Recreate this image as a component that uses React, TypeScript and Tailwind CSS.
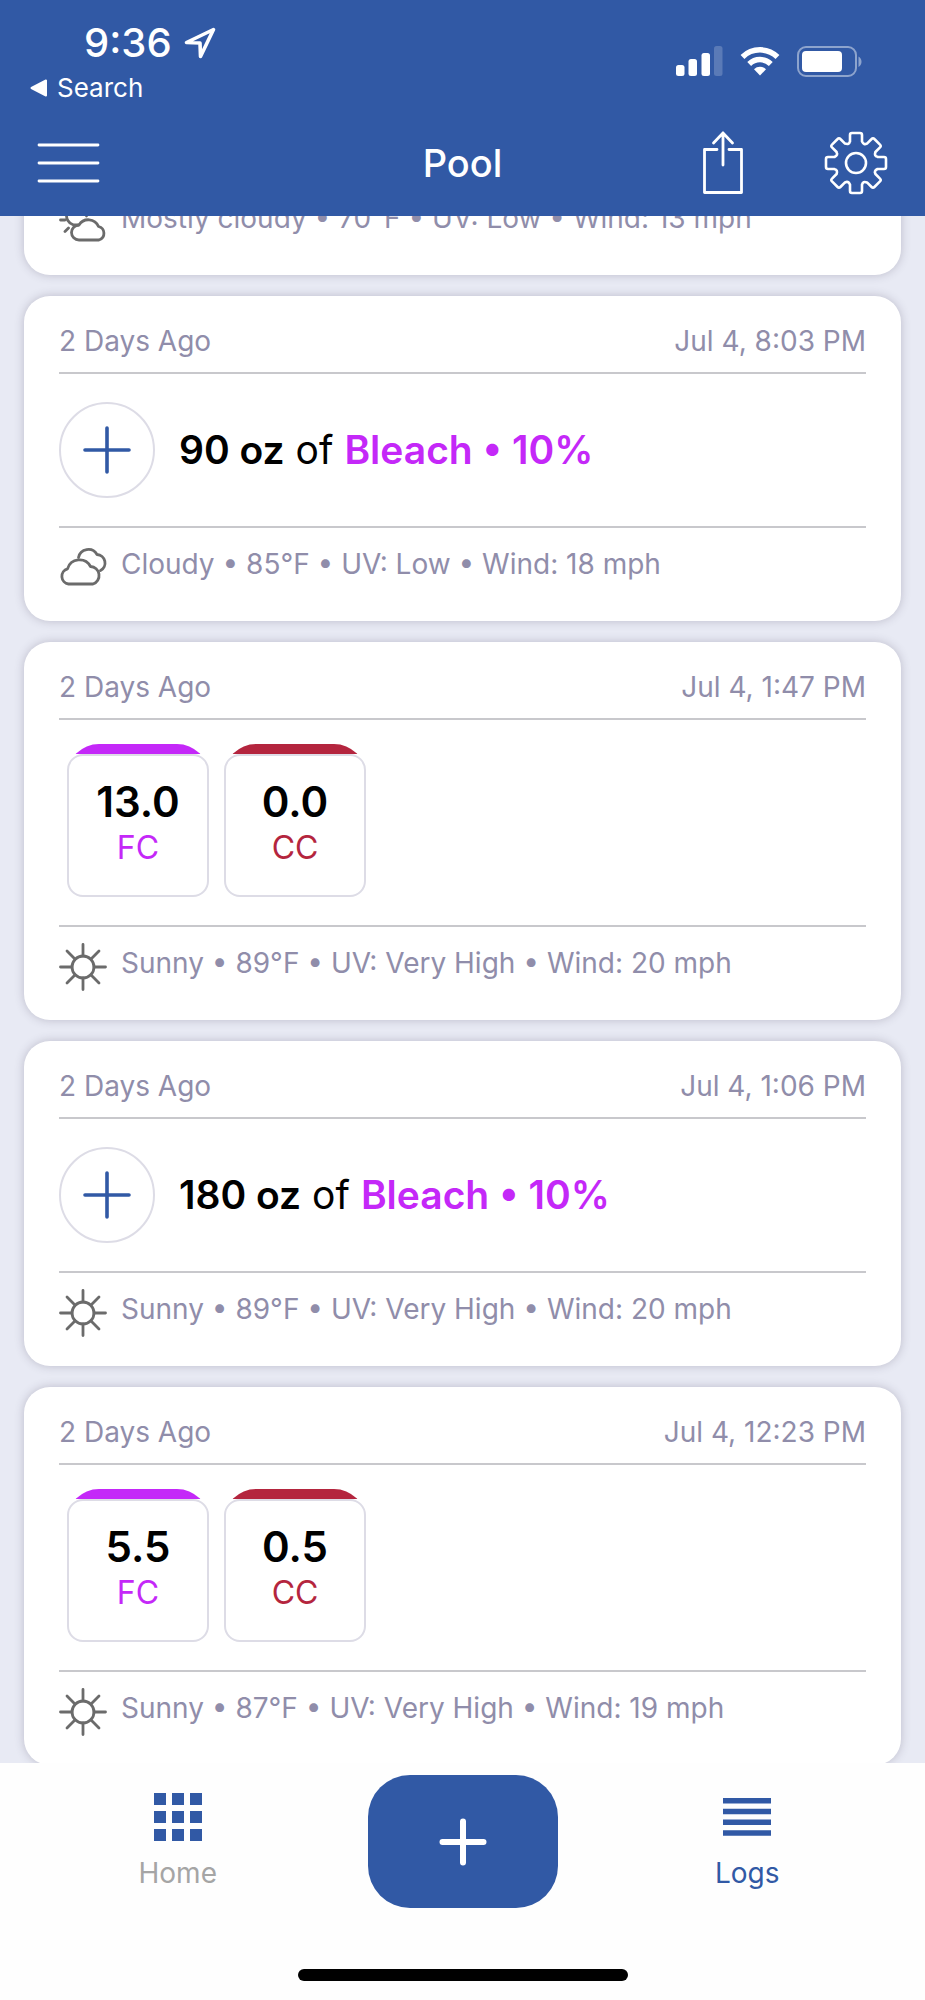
import { useState } from 'react';
import type { ReactNode } from 'react';

type Weather = 'sunny' | 'cloudy' | 'mostly-cloudy';

interface Reading {
  label: 'FC' | 'CC';
  value: string;
}

interface LogEntry {
  id: number;
  age: string;
  date: string;
  addition?: { amount: string; chemical: string };
  readings?: Reading[];
  weather: Weather;
  summary: string;
}

const logs: LogEntry[] = [
  {
    id: 1,
    age: '2 Days Ago',
    date: 'Jul 4, 8:03 PM',
    addition: { amount: '90 oz', chemical: 'Bleach • 10%' },
    weather: 'cloudy',
    summary: 'Cloudy • 85°F • UV: Low • Wind: 18 mph',
  },
  {
    id: 2,
    age: '2 Days Ago',
    date: 'Jul 4, 1:47 PM',
    readings: [
      { label: 'FC', value: '13.0' },
      { label: 'CC', value: '0.0' },
    ],
    weather: 'sunny',
    summary: 'Sunny • 89°F • UV: Very High • Wind: 20 mph',
  },
  {
    id: 3,
    age: '2 Days Ago',
    date: 'Jul 4, 1:06 PM',
    addition: { amount: '180 oz', chemical: 'Bleach • 10%' },
    weather: 'sunny',
    summary: 'Sunny • 89°F • UV: Very High • Wind: 20 mph',
  },
  {
    id: 4,
    age: '2 Days Ago',
    date: 'Jul 4, 12:23 PM',
    readings: [
      { label: 'FC', value: '5.5' },
      { label: 'CC', value: '0.5' },
    ],
    weather: 'sunny',
    summary: 'Sunny • 87°F • UV: Very High • Wind: 19 mph',
  },
];

const readingColors = {
  FC: { bar: 'bg-[#c428f8]', text: 'text-[#c428f8]' },
  CC: { bar: 'bg-[#b4253e]', text: 'text-[#b4253e]' },
};

const WeatherIcon = ({ type }: { type: Weather }) => (
  <svg
    viewBox="0 0 48 48"
    className="size-12 shrink-0"
    fill="none"
    stroke="#6b6b6b"
    strokeWidth="2.8"
    strokeLinecap="round"
    strokeLinejoin="round"
    aria-hidden="true"
  >
    {type === 'sunny' && (
      <>
        <circle cx="24" cy="24" r="11" />
        <path d="M24 13V1.5M24 35v11.5M13 24H1.5M35 24h11.5M16.2 16.2 8 8M31.8 16.2 40 8M16.2 31.8 8 40M31.8 31.8 40 40" />
      </>
    )}
    {type === 'cloudy' && (
      <>
        <path d="M9.5 40A7.800 7.800 0 0 1 8.500 24.800 12.500 12.500 0 0 1 31.500 22.500 9 9 0 0 1 34 40z" />
        <path d="M19.500 13.500A10 10 0 0 1 38 10.500a8.500 8.500 0 0 1 3.500 16" />
      </>
    )}
    {type === 'mostly-cloudy' && (
      <>
        <path d="M20 42a7.500 7.500 0 0 1 0-15 11 11 0 0 1 19.500 1.500A7 7 0 0 1 40 42z" />
        <path d="M19.500 27h-5a10 10 0 1 1 13-9M1.500 22H6M9.500 30 6 33.500M9 12 6 9M20 7V3" />
      </>
    )}
  </svg>
);

const WeatherRow = ({ type, summary }: { type: Weather; summary: string }) => (
  <div className="flex items-start gap-3.5 pt-4 pb-[29px]">
    <WeatherIcon type={type} />
    <p className="text-[28px] leading-10 text-[#908daa]">{summary}</p>
  </div>
);

const Card = ({ children }: { children: ReactNode }) => (
  <li className="rounded-[26px] bg-white px-[35px] shadow-[0_0_10px_rgba(60,50,80,0.25)]">{children}</li>
);

const LogCard = ({ log }: { log: LogEntry }) => (
  <Card>
    <div className="flex h-[78px] items-center justify-between border-b-2 border-[#c8c8cc] pt-3.5 text-[28px] leading-10 text-[#908daa]">
      <span>{log.age}</span>
      <time>{log.date}</time>
    </div>
    {log.addition && (
      <div className="flex items-center gap-6 border-b-2 border-[#c8c8cc] py-7">
        <span className="flex size-[96px] shrink-0 items-center justify-center rounded-full border-2 border-[#dddce6]">
          <svg viewBox="0 0 48 48" className="size-12" stroke="#3159a5" strokeWidth="3.6" strokeLinecap="round" aria-hidden="true">
            <path d="M24 2v44M2 24h44" />
          </svg>
        </span>
        <p className="text-[39px] leading-12 text-black">
          <span className="font-semibold">{log.addition.amount}</span> of{' '}
          <span className="font-semibold text-[#c428f8]">{log.addition.chemical}</span>
        </p>
      </div>
    )}
    {log.readings && (
      <ul className="flex gap-[15px] border-b-2 border-[#c8c8cc] px-2 pt-6 pb-7">
        {log.readings.map((reading) => (
          <li key={reading.label} className="w-[142px]">
            {/* coloured tab on top of the tile */}
            <div className="h-[10px] overflow-hidden">
              <div className={`h-14 rounded-t-[32px] ${readingColors[reading.label].bar}`} />
            </div>
            <div className="flex h-[143px] flex-col items-center rounded-2xl border-2 border-[#dddce6] bg-white pt-5">
              <span className="text-[42px] leading-[52px] font-semibold text-black">{reading.value}</span>
              <span className={`text-[32px] leading-10 ${readingColors[reading.label].text}`}>{reading.label}</span>
            </div>
          </li>
        ))}
      </ul>
    )}
    <WeatherRow type={log.weather} summary={log.summary} />
  </Card>
);

const StatusBar = () => (
  <div className="flex justify-between pt-[18px] pr-[62px] pl-[30px]">
    <div>
      <div className="flex items-center gap-3 pl-[54px]">
        <span className="text-[40px] leading-[50px] font-medium">9:36</span>
        <svg viewBox="0 0 32 32" className="size-8" fill="none" stroke="currentColor" strokeWidth="3.6" strokeLinejoin="round" aria-hidden="true">
          <path d="M29.5 2.5 2.5 15.5l13.5.5.5 13.5z" />
        </svg>
      </div>
      <a href="#search" className="flex items-center gap-2.5 text-[26px] leading-10">
        <svg viewBox="0 0 17 18" className="h-[18px] w-[17px]" fill="currentColor" stroke="currentColor" strokeWidth="2" strokeLinejoin="round" aria-hidden="true">
          <path d="M1.5 9 16 1.5v15z" />
        </svg>
        Search
      </a>
    </div>
    <div className="flex items-start gap-[17px] pt-7">
      <svg viewBox="0 0 47 30" className="h-[30px] w-[47px]" fill="currentColor" aria-hidden="true">
        <rect x="0" y="19" width="8.5" height="11" rx="2.5" />
        <rect x="12.5" y="13" width="8.5" height="17" rx="2.5" />
        <rect x="25.5" y="7" width="8.5" height="23" rx="2.5" />
        <rect x="38" y="0" width="8.5" height="30" rx="2.5" opacity="0.2" />
      </svg>
      <svg viewBox="0 0 40 30" className="h-[30px] w-10" aria-hidden="true">
        <g fill="none" stroke="currentColor" strokeWidth="5.5">
          <path d="M2.5 11a25 25 0 0 1 35 0" />
          <path d="M9.2 18a15.5 15.5 0 0 1 21.6 0" />
        </g>
        <path d="M20 29.500 14 23.200a8.600 8.600 0 0 1 12 0z" fill="currentColor" />
      </svg>
      <svg viewBox="0 0 66 32" className="h-8 w-[66px]" fill="currentColor" aria-hidden="true">
        <rect x="1" y="1" width="58" height="29" rx="8" fill="none" stroke="currentColor" strokeWidth="2" opacity="0.45" />
        <rect x="5" y="5" width="40" height="21" rx="4" />
        <path d="M61.5 10.5c4 2 4 8.500 0 10.500z" opacity="0.45" />
      </svg>
    </div>
  </div>
);

// one tooth outline, repeated every 45 degrees
const gearPath = () => {
  const point = (x: number, y: number, deg: number) => {
    const a = (deg * Math.PI) / 180;
    return `${(32 + x * Math.cos(a) - y * Math.sin(a)).toFixed(1)} ${(32 + x * Math.sin(a) + y * Math.cos(a)).toFixed(1)}`;
  };
  let d = '';
  for (let deg = 0; deg < 360; deg += 45) {
    d += `${deg === 0 ? 'M' : 'L'}${point(-6, -21.5, deg)}`;
    d += `L${point(-6, -28, deg)}Q${point(-6, -30, deg)} ${point(-4, -30, deg)}`;
    d += `L${point(4, -30, deg)}Q${point(6, -30, deg)} ${point(6, -28, deg)}`;
    d += `L${point(6, -21.5, deg)}Q${point(8, -17.5, deg)} ${point(10.8, -19.5, deg)}`;
  }
  return `${d}Z`;
};

const Header = () => (
  <header className="shrink-0 bg-[#3159a5] text-white">
    <StatusBar />
    <div className="grid grid-cols-[1fr_auto_1fr] items-center px-[37px] pt-[23px] pb-[21px]">
      <button aria-label="Menu" className="justify-self-start">
        <svg viewBox="0 0 64 64" className="size-16" stroke="currentColor" strokeWidth="2.8" strokeLinecap="round">
          <path d="M2 14h59M2 32h59M2 50h59" />
        </svg>
      </button>
      <h1 className="text-[38px] leading-12 font-medium">Pool</h1>
      <div className="flex items-center gap-20 justify-self-end">
        <button aria-label="Share">
          <svg viewBox="0 0 42 64" className="h-16 w-[42px]" fill="none" stroke="currentColor" strokeWidth="2.8" strokeLinecap="round" strokeLinejoin="round">
            <path d="M15 18.5H2.500V61.500h37V18.500H27M21 34V2M11.500 12 21 2l9.500 10" />
          </svg>
        </button>
        <button aria-label="Settings">
          <svg viewBox="0 0 64 64" className="size-16" fill="none" stroke="currentColor" strokeWidth="2.6" strokeLinejoin="round">
            <path d={gearPath()} />
            <circle cx="32" cy="32" r="10" />
          </svg>
        </button>
      </div>
    </div>
  </header>
);

const TabBar = () => {
  const [tab, setTab] = useState('logs');

  return (
    <footer className="shrink-0 bg-[#fefefe]">
      <nav className="grid grid-cols-[1fr_190px_1fr] items-start pt-3">
        <button onClick={() => setTab('home')} className="flex flex-col items-center gap-3 justify-self-center pt-[18px] pr-3">
          <svg viewBox="0 0 48 48" className="size-12" fill="#3159a5" aria-hidden="true">
            <path d="M0 0h12v12H0zM18 0h12v12H18zM36 0h12v12H36zM0 18h12v12H0zM18 18h12v12H18zM36 18h12v12H36zM0 36h12v12H0zM18 36h12v12H18zM36 36h12v12H36z" />
          </svg>
          <span className={`text-[28px] leading-10 ${tab === 'home' ? 'text-[#3159a5]' : 'text-[#a5a5a5]'}`}>Home</span>
        </button>
        <button aria-label="Add log" className="flex h-[133px] items-center justify-center rounded-[42px] bg-[#3159a5]">
          <svg viewBox="0 0 48 48" className="size-12" stroke="white" strokeWidth="6" strokeLinecap="round">
            <path d="M24 3.5v41M3.5 24h41" />
          </svg>
        </button>
        <button onClick={() => setTab('logs')} className="flex flex-col items-center gap-3 justify-self-center pt-[18px] pl-3">
          <svg viewBox="0 0 48 48" className="size-12" fill="#3159a5" aria-hidden="true">
            <path d="M0 5h48v5.500H0zM0 15.700h48v5.500H0zM0 26.500h48V32H0zM0 37.300h48v5.500H0z" />
          </svg>
          <span className={`text-[28px] leading-10 ${tab === 'logs' ? 'text-[#3159a5]' : 'text-[#a5a5a5]'}`}>Logs</span>
        </button>
      </nav>
      <div className="mx-auto mt-[61px] mb-[19px] h-3 w-[330px] rounded-full bg-black" />
    </footer>
  );
};

export default function App() {
  return (
    <div className="flex h-screen flex-col overflow-hidden bg-[#e8eaf4] font-['Inter','Liberation_Sans',sans-serif]">
      <Header />
      <main className="min-h-0 flex-1 overflow-hidden">
        {/* the list is scrolled so that the first card sits partly under the header */}
        <ul className="-mt-[34px] flex flex-col gap-[21px] px-6">
          <Card>
            <WeatherRow type="mostly-cloudy" summary="Mostly cloudy • 70°F • UV: Low • Wind: 13 mph" />
          </Card>
          {logs.map((log) => (
            <LogCard key={log.id} log={log} />
          ))}
        </ul>
      </main>
      <TabBar />
    </div>
  );
}
